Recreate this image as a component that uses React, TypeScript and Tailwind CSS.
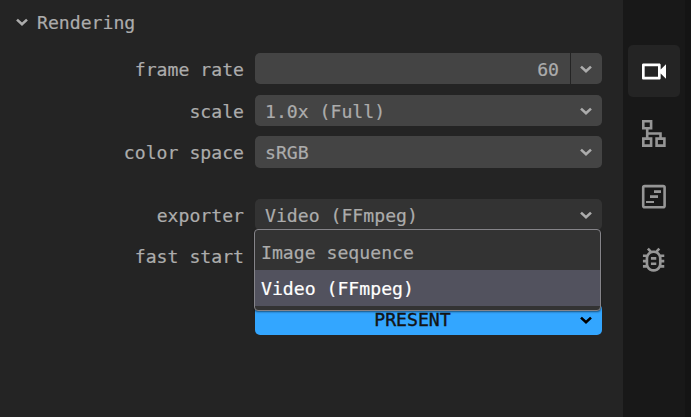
import React from 'react';

function Chevron({ className = '' }: { className?: string }) {
  return (
    <svg className={`h-[8px] w-[12px] shrink-0 ${className}`} viewBox="0 0 12 8" fill="none" stroke="currentColor" strokeWidth="2.6">
      <path d="M1 1.6 6 6.2 11 1.6" />
    </svg>
  );
}

function Row({ label, className = '', children }: { label: string; className?: string; children?: React.ReactNode }) {
  return (
    <div className={`flex h-[31px] items-center ${className}`}>
      <div className="w-[244px] shrink-0 pt-[2px] text-right">{label}</div>
      <div className="ml-[11px] h-full w-[347px]">{children}</div>
    </div>
  );
}

function Select({ value, className = 'bg-[#444444]' }: { value: string; className?: string }) {
  return (
    <div className={`flex h-full items-center justify-between rounded-[5px] pr-[10px] pl-[10px] ${className}`}>
      <span className="pt-[2px]">{value}</span>
      <Chevron />
    </div>
  );
}

function Tab({ active = false, children }: { active?: boolean; children: React.ReactNode }) {
  return (
    <div className={`flex h-[52px] w-[52px] items-center justify-center rounded-[5px] ${active ? 'bg-[#242424] text-white' : 'text-[#969696]'}`}>
      {children}
    </div>
  );
}

export default function App() {
  return (
    <div className="flex h-[417px] w-[691px] overflow-hidden bg-[#242424] font-['DejaVu_Sans_Mono',monospace] text-[18.15px] leading-[24px] whitespace-pre text-[#acacac] [-webkit-text-stroke:0.2px_currentColor]">
      <main className="w-[623px] shrink-0">
        <div className="flex h-[53px] items-start pt-[11px] pl-[16px]">
          <Chevron className="mt-[7px] mr-[9px]" />
          <span>Rendering</span>
        </div>
        <Row label="frame rate">
          <div className="flex h-full gap-px">
            <div className="flex w-[315px] items-center justify-end rounded-l-[5px] bg-[#444444] pt-[2px] pr-[11px]">60</div>
            <div className="flex w-[31px] items-center justify-center rounded-r-[5px] bg-[#444444] pr-px">
              <Chevron />
            </div>
          </div>
        </Row>
        <Row label="scale" className="mt-[11px]">
          <Select value="1.0x (Full)" />
        </Row>
        <Row label="color space" className="mt-[10px] h-[32px]">
          <Select value="sRGB" />
        </Row>
        <div className="relative mt-[31px]">
          <Row label="exporter">
            <Select value="Video (FFmpeg)" className="bg-[#333333]" />
          </Row>
          <div className="absolute top-[30px] left-[254px] z-10 h-[82px] w-[347px] rounded-[4px] border border-[#858489] bg-[#333333] pt-[4px] shadow-[0_1px_2px_rgba(0,0,0,0.5)]">
            <div className="flex h-[36px] items-center pt-px pl-[6px]">Image sequence</div>
            <div className="flex h-[36px] items-center bg-[#52525e] pt-px pl-[6px] text-white">Video (FFmpeg)</div>
          </div>
        </div>
        <Row label="fast start" className="mt-[10px]" />
        <div className="mt-[33px] ml-[255px] flex h-[31px] w-[347px] items-center rounded-[5px] bg-[#33a6ff] pr-[10px] text-[#141414]">
          <span className="flex-1 pr-[10px] text-center [-webkit-text-stroke:0.4px_currentColor]">PRESENT</span>
          <Chevron className="text-black" />
        </div>
      </main>
      <aside className="flex w-[62px] shrink-0 flex-col items-center gap-[11px] bg-[#181818] pt-[45px]">
        <Tab active>
          <svg className="h-8 w-8" viewBox="0 -0.4 24 24" fill="currentColor">
            <path d="M15 8v8H5V8h10m1-2H4c-.55 0-1 .45-1 1v10c0 .55.45 1 1 1h12c.55 0 1-.45 1-1v-3.5l4 4v-11l-4 4V7c0-.55-.45-1-1-1z" />
          </svg>
        </Tab>
        <Tab>
          <svg className="h-8 w-8" viewBox="0 0 32 32" fill="none" stroke="currentColor" strokeWidth="2.6">
            <path d="M5.3 3.3h7.8v7H5.3zM5.3 20.6h7.8v7H5.3zM18.6 20.6h7.8v7h-7.8zM9.2 10.3v10.3M9.2 15.5h13.3v5.1" />
          </svg>
        </Tab>
        <Tab>
          <svg className="h-8 w-8" viewBox="0 0 32 32" fill="none" stroke="currentColor" strokeWidth="2.6">
            <rect x="5.2" y="5.1" width="21.4" height="21.1" rx="1.5" />
            <path d="M16 10.6h7M12 15.6h8" strokeWidth="2.8" />
            <path d="M8 21h8" strokeWidth="2" />
          </svg>
        </Tab>
        <Tab>
          <svg className="h-8 w-8" viewBox="0.3 0.2 24 24" fill="currentColor">
            <path d="M20 8h-2.81c-.45-.78-1.07-1.45-1.82-1.96L17 4.41 15.59 3l-2.17 2.17C12.96 5.06 12.49 5 12 5s-.96.06-1.41.17L8.41 3 7 4.41l1.62 1.63C7.88 6.55 7.26 7.22 6.81 8H4v2h2.09c-.05.33-.09.66-.09 1v1H4v2h2v1c0 .34.04.67.09 1H4v2h2.81c1.04 1.79 2.97 3 5.19 3s4.15-1.21 5.19-3H20v-2h-2.09c.05-.33.09-.66.09-1v-1h2v-2h-2v-1c0-.34-.04-.67-.09-1H20V8zm-4 7c0 2.21-1.79 4-4 4s-4-1.79-4-4v-4c0-2.21 1.79-4 4-4s4 1.79 4 4v4zm-6-1h4v2h-4zm0-4h4v2h-4z" />
          </svg>
        </Tab>
      </aside>
      <div className="flex-1 bg-[#141414]" />
    </div>
  );
}
